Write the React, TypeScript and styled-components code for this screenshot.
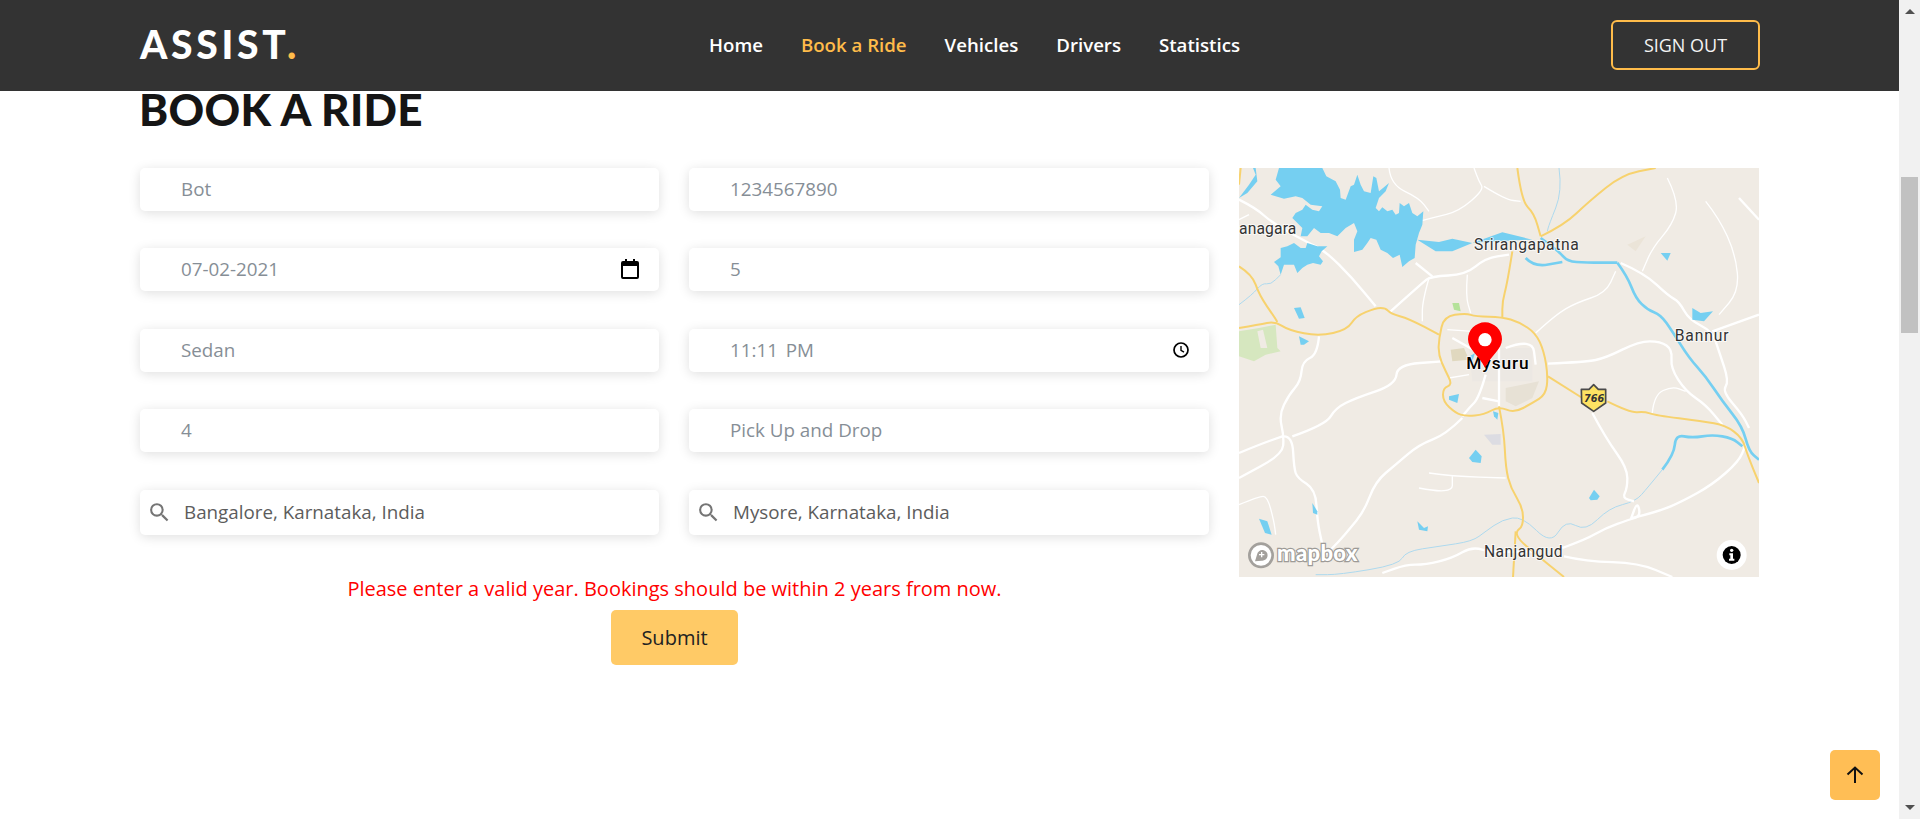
import React from 'react';
import styled, { createGlobalStyle } from 'styled-components';

const GlobalStyle = createGlobalStyle`
  html, body {
    margin: 0;
    height: 100%;
    overflow: hidden;
    background: #fff;
    font-family: 'Open Sans', 'Liberation Sans', sans-serif;
  }
`;

const Viewport = styled.div`
  display: flex;
  height: 100vh;
`;

const Page = styled.div`
  flex: 1;
  min-width: 0;
`;

const NavBar = styled.nav`
  display: flex;
  align-items: center;
  box-sizing: border-box;
  height: 91px;
  padding: 0 139px 1px 140px;
  background: #333;
`;

const Logo = styled.div`
  flex: 0 0 569px;
  font-family: Lato, sans-serif;
  font-size: 39px;
  font-weight: 900;
  letter-spacing: 3.7px;
  line-height: 46px;
  margin-top: -2px;
  color: #fff;

  span {
    color: #ffbc4a;
  }
`;

const NavLinks = styled.div`
  display: flex;
  gap: 38px;
  margin: 0 auto 2px 0;
`;

const NavLink = styled.a<{ $active?: boolean }>`
  font-size: 18.65px;
  font-weight: 600;
  color: ${(p) => (p.$active ? '#ffbc4a' : '#fff')};
`;

const SignOut = styled.button`
  width: 149px;
  height: 50px;
  padding: 0;
  background: transparent;
  border: 2px solid #ffbc4a;
  border-radius: 6px;
  color: #f4f4f4;
  font-family: inherit;
  font-size: 18px;
`;

const Content = styled.main`
  padding: 0 140px;
`;

const Title = styled.h1`
  margin: 0 0 0 -1px;
  height: 77px;
  font-family: Lato, sans-serif;
  font-size: 44px;
  font-weight: 900;
  letter-spacing: 0.3px;
  line-height: 36px;
  color: #151515;
`;

const Columns = styled.div`
  display: flex;
  gap: 30px;
`;

const Form = styled.form`
  display: flex;
  flex-direction: column;
  align-items: center;
  width: 1069px;
`;

const FieldGrid = styled.div`
  display: grid;
  grid-template-columns: 519px 520px;
  gap: 37.4px 30px;
  width: 100%;
`;

const Field = styled.div<{ $search?: boolean }>`
  display: flex;
  align-items: center;
  box-sizing: border-box;
  height: ${(p) => (p.$search ? '45px' : '43px')};
  padding: ${(p) => (p.$search ? '0 20px 0 7px' : '0 20px 1px 41px')};
  background: #fff;
  border-radius: 5px;
  box-shadow: 0 2px 12px rgba(0, 0, 0, 0.13);
  font-size: 18.8px;
  color: ${(p) => (p.$search ? '#5c5c5c' : '#868e96')};
`;

const FieldText = styled.span<{ $time?: boolean }>`
  flex: 1;
  word-spacing: ${(p) => (p.$time ? '3px' : '0')};
`;

const SearchIcon = styled.svg`
  flex: none;
  width: 25px;
  height: 25px;
  margin-right: 12px;
  fill: #757575;
`;

const ErrorText = styled.p`
  margin: 40px 0 8px;
  font-size: 20px;
  line-height: 27px;
  color: #f00;
`;

const Submit = styled.button`
  width: 127px;
  height: 55px;
  padding: 0;
  background: #ffca66;
  border: 0;
  border-radius: 5px;
  color: #222;
  font-family: inherit;
  font-size: 20px;
`;

const MapFrame = styled.div`
  flex: none;
  width: 520px;
  height: 409px;
  overflow: hidden;
  background: #f0ebe4;
`;

const MapDrawing = styled.svg`
  display: block;
  width: 520px;
  height: 409px;
`;

const MapBase = styled.g`
  filter: blur(1.2px);
`;

const MapLabel = styled.text<{ $size?: number; $strong?: boolean }>`
  font-family: Roboto, sans-serif;
  font-size: ${(p) => p.$size ?? 47}px;
  font-weight: ${(p) => (p.$strong ? 500 : 400)};
  fill: ${(p) => (p.$strong ? '#000' : '#333')};
  stroke: rgba(255, 255, 255, 0.7);
  stroke-width: 6px;
  paint-order: stroke;
`;

const ShieldNumber = styled.text`
  font-family: 'DejaVu Sans', sans-serif;
  font-size: 29px;
  font-weight: 700;
  font-style: italic;
  fill: #333;
`;

const MapboxMark = styled.text`
  font-family: Lato, sans-serif;
  font-size: 66px;
  font-weight: 900;
  letter-spacing: 1px;
  fill: #fff;
  stroke: #9d9a96;
  stroke-width: 7px;
  paint-order: stroke;
`;

const ScrollTrack = styled.div`
  display: flex;
  flex: none;
  flex-direction: column;
  align-items: center;
  width: 21px;
  background: #f1f1f1;
`;

const ScrollArrow = styled.div<{ $down?: boolean }>`
  width: 0;
  height: 0;
  margin: ${(p) => (p.$down ? 'auto 0 9px' : '9px 0 0')};
  border-left: 5px solid transparent;
  border-right: 5px solid transparent;
  ${(p) => (p.$down ? 'border-top: 5px solid #505050;' : 'border-bottom: 5px solid #505050;')}
`;

const ScrollThumb = styled.div`
  width: 17px;
  height: 156px;
  margin-top: 163px;
  background: #c1c1c1;
`;

const BackToTop = styled.button`
  position: fixed;
  right: 40px;
  bottom: 19px;
  display: flex;
  align-items: center;
  justify-content: center;
  width: 50px;
  height: 50px;
  padding: 0;
  background: #ffbe55;
  border: 0;
  border-radius: 5px;
`;

const searchPath =
  'M15.5 14h-.79l-.28-.27A6.471 6.471 0 0 0 16 9.5 6.5 6.5 0 1 0 9.5 16c1.61 0 3.09-.59 4.23-1.57l.27.28v.79l5 4.99L20.49 19l-4.99-5zm-6 0C7.01 14 5 11.99 5 9.5S7.01 5 9.5 5 14 7.01 14 9.5 11.99 14 9.5 14z';

const CalendarIcon = () => (
  <svg width="18" height="20" viewBox="0 0 18 20">
    <path
      fillRule="evenodd"
      d="M4 0h2v2h6V0h2v2h2a2 2 0 0 1 2 2v14a2 2 0 0 1-2 2H2a2 2 0 0 1-2-2V4a2 2 0 0 1 2-2h2V0zM2 7v11h14V7H2z"
    />
  </svg>
);

const ClockIcon = () => (
  <svg width="16" height="16" viewBox="0 0 16 16" fill="none" stroke="#000">
    <circle cx="8" cy="8" r="7" strokeWidth="1.7" />
    <path d="M8 4v4.4l3 1.8" strokeWidth="1.4" />
  </svg>
);

// rounds a hand-traced polyline so roads and rivers don't show their corners
const smooth = (d: string) => {
  const closed = d.endsWith('Z');
  const pts = d
    .replace(/[MZ]/g, '')
    .split('L')
    .map((p) => p.trim().split(' ').map(Number));
  const mid = (a: number[], b: number[]) => `${(a[0] + b[0]) / 2} ${(a[1] + b[1]) / 2}`;
  if (closed) {
    let out = `M${mid(pts[pts.length - 1], pts[0])}`;
    pts.forEach((p, i) => {
      out += `Q${p[0]} ${p[1]} ${mid(p, pts[(i + 1) % pts.length])}`;
    });
    return `${out}Z`;
  }
  let out = `M${pts[0][0]} ${pts[0][1]}`;
  for (let i = 1; i < pts.length - 1; i++) {
    out += `Q${pts[i][0]} ${pts[i][1]} ${mid(pts[i], pts[i + 1])}`;
  }
  const last = pts[pts.length - 1];
  return `${out}L${last[0]} ${last[1]}`;
};

const yellowRoads = [
  'M615 445L680 436L710 445L790 447L840 462L890 495L915 550L927 625L920 680L880 705L825 735L780 715L735 740L680 745L650 735L612 700L612 660L640 650L620 610L598 560L600 510Z',
  'M0 480L60 470L108 460L150 487L240 505L325 485L350 445L410 420L440 420L455 437L510 452L600 500',
  'M0 295L40 320L60 380L108 450L115 462',
  'M835 0L848 100L885 135L905 205',
  'M820 250L805 345L790 400L790 447',
  'M905 205L975 172L1050 100L1150 20L1250 0',
  'M927 625L1030 690',
  'M1105 700L1175 735L1215 730L1250 742L1390 760L1460 772L1510 810L1525 860L1560 945',
  'M780 715L795 790L800 900L815 960L852 1020L852 1075L830 1090L840 1115L880 1150L975 1227',
  'M830 1090L822 1227',
  'M5 0L0 50',
];

const whiteRoads = [
  'M0 95L50 120L100 165L200 220L260 250L340 330L410 415',
  'M455 430L550 345L575 325L680 320L740 270L810 260',
  'M530 285L580 325',
  'M240 505L235 560L190 580L185 640L150 680L120 740L135 805L130 860L0 930',
  'M135 805L160 805L165 900L175 930L230 965L235 1060L250 1130',
  'M0 855L60 830L130 805',
  'M160 805L260 770L290 720L350 690L470 650L475 590L610 580',
  'M670 750L620 800L540 830L470 890L410 940L375 1030L330 1085L300 1120L260 1160',
  'M927 587L1040 582L1100 570L1200 520L1265 520L1300 545L1295 600L1340 670L1400 710L1450 770',
  'M1145 285L1215 315L1290 385L1320 400L1350 455L1420 490L1440 550L1470 640L1450 670L1510 740L1530 780',
  'M1420 490L1560 440',
  'M1060 735L1100 810L1165 900L1165 960L1150 990L1185 1000',
  'M1180 1050L1260 1030L1330 1000L1420 950L1500 880L1520 830',
  'M970 1140L1040 1115L1100 1080L1170 1055L1205 1045L1195 1000L1175 1055',
  'M880 1150L760 1155L700 1135L640 1170L560 1190L500 1190L430 1215',
  'M975 1165L1040 1180L1200 1185L1300 1227',
  'M780 520L780 715',
  'M740 620L720 690L690 720L670 745',
  'M800 540L880 510L890 590',
  'M730 690L780 700',
  'M640 510L720 555',
  'M1500 90L1560 155',
];

const thinRoads = [
  'M570 330L550 400L550 460',
  'M685 320L680 385L695 435',
  'M540 160L585 148L660 130L735 65L720 40L705 0',
  'M735 55L800 95L845 100',
  'M890 495L950 440L1010 405L1100 375L1130 310',
  'M1285 30L1320 100L1300 170L1240 240L1210 310',
  'M1400 100L1440 150L1490 260L1500 370L1440 440',
  'M570 915L640 925L800 930',
  'M540 960L640 980L640 925',
  'M0 1010L60 985L85 985L105 1060L110 1100',
  'M625 485L700 490',
  'M630 630L690 620',
  'M1240 735L1245 680L1300 655L1340 670',
  'M450 0L455 50L540 90L570 130',
  'M0 155L30 140',
];

const thinRivers = [
  'M1270 905L1225 960L1190 1000L1110 1020L1040 1090L980 1055L935 1130L850 1045L790 1055L740 1090L700 1120L600 1135L500 1150L480 1190L300 1220L230 1220',
  'M960 0L970 70L930 170L925 190',
  'M0 410L40 380L70 345L95 350L125 320',
];

const lakes = [
  'M120 0L250 0L262 25L290 40L303 65L305 90L320 95L335 55L345 50L355 20L365 50L375 70L395 75L403 25L412 30L420 70L432 60L450 45L440 70L420 90L410 120L420 130L430 118L445 130L460 125L470 140L480 135L482 105L495 115L510 105L520 135L535 145L553 130L550 170L540 195L530 230L527 270L510 280L490 297L482 260L462 270L445 255L425 245L412 215L395 210L385 225L370 245L345 252L345 215L355 190L345 165L320 180L295 205L270 195L245 195L225 180L205 205L185 205L190 180L160 150L170 135L190 125L200 110L220 125L240 130L250 115L215 110L190 90L170 85L135 92L95 80L125 55L110 35Z',
  'M125 240L145 235L165 225L185 240L200 240L205 225L235 235L265 235L248 250L240 265L252 280L245 290L222 285L205 290L190 300L175 315L165 290L135 290L125 320L118 295L105 282L125 268Z',
  'M535 215L600 222L640 212L700 225L640 250L590 250Z',
  'M700 225L790 193L880 215L800 218Z',
  'M165 420L185 418L197 450L180 452Z',
  'M180 505L210 520L195 530L185 530Z',
  'M1265 255L1295 255L1285 278Z',
  'M1360 420L1385 435L1422 430L1395 460L1360 455Z',
  'M630 685L660 678L655 705L630 695Z',
  'M762 730L778 735L775 755L765 745Z',
  'M690 870L710 845L728 865L725 885L700 882Z',
  'M1050 990L1065 965L1082 985L1075 995L1055 997Z',
  'M220 1005L235 1030L235 1040L222 1035Z',
  'M60 1052L85 1060L98 1100L78 1095Z',
  'M535 1060L555 1080L567 1075L565 1090L540 1085Z',
  'M692 565L708 555L700 580Z',
  'M0 90L30 50L50 20L42 0L50 0L55 40L25 75Z',
];

const rivers = [
  'M905 210L960 250L985 280L1040 284L1135 284',
  'M860 270L885 297L970 282',
  'M1135 284L1165 325L1190 390L1225 425L1265 440L1300 490L1350 570L1400 625L1450 700L1510 775L1530 850L1560 875',
  'M1270 905L1305 860L1310 800L1360 810L1420 800L1480 810L1510 835',
];

const terrain: [string, string][] = [
  ['#d6e7bf', 'M0 490L60 480L110 470L115 540L125 550L80 560L45 580L0 565Z'],
  ['#f0ebe4', 'M55 490L72 485L85 540L65 540Z'],
  ['#b5e29a', 'M640 405L660 405L665 430L645 425Z'],
  ['#b5e29a', 'M793 615L820 610L810 625L795 627Z'],
  ['#ece8e3', 'M690 540L880 540L880 640L700 640Z'],
  ['#e0d8bf', 'M635 545L675 540L690 575L640 580Z'],
  ['#e7e1d5', 'M800 660L900 640L880 690L830 715L800 700Z'],
  ['#ebe4d8', 'M1165 230L1220 205L1190 250Z'],
  ['#dcdce2', 'M735 800L785 798L785 830L760 830Z'],
];

const MysoreMap = () => (
  <MapDrawing viewBox="0 0 1560 1227">
    <MapBase>
      {terrain.map(([color, d]) => (
        <path key={d} d={d} fill={color} />
      ))}
      {thinRivers.map((d) => (
        <path key={d} d={smooth(d)} fill="none" stroke="#add9ee" strokeWidth="3" />
      ))}
      {thinRoads.map((d) => (
        <path key={d} d={smooth(d)} fill="none" stroke="#fff" strokeWidth="4" />
      ))}
      {whiteRoads.map((d) => (
        <path key={d} d={smooth(d)} fill="none" stroke="#fff" strokeWidth="7" />
      ))}
      {lakes.map((d) => (
        <path key={d} d={d} fill="#75cff1" />
      ))}
      {rivers.map((d) => (
        <path key={d} d={smooth(d)} fill="none" stroke="#75cff1" strokeWidth="8" />
      ))}
      {yellowRoads.map((d) => (
        <path key={d} d={smooth(d)} fill="none" stroke="#f7d26e" strokeWidth="6" />
      ))}
    </MapBase>

    <MapLabel x="0" y="197" textLength="172">anagara</MapLabel>
    <MapLabel x="705" y="247" textLength="314">Srirangapatna</MapLabel>
    <MapLabel x="1307" y="520" textLength="162">Bannur</MapLabel>
    <MapLabel x="735" y="1168" textLength="236">Nanjangud</MapLabel>
    <MapLabel x="682" y="604" $size={52} $strong textLength="187">Mysuru</MapLabel>

    <path
      d="M1027 664L1050 664L1064 650L1078 664L1100 664L1100 705L1064 730L1028 705Z"
      fill="#fde263"
      stroke="#4a4a4a"
      strokeWidth="5"
      strokeLinejoin="round"
    />
    <ShieldNumber x="1035" y="701">766</ShieldNumber>

    <path
      d="M738 463a51 51 0 0 1 51 51c0 30-32 48-51 85c-19-37-51-55-51-85a51 51 0 0 1 51-51z"
      fill="#f00"
    />
    <circle cx="738" cy="515" r="20" fill="#fff" />

    <circle cx="66" cy="1162" r="35" fill="#fff" stroke="#a3a09c" strokeWidth="8" />
    <path d="M48 1180L54 1160a16 16 0 1 1 14 18Z" fill="#a3a09c" />
    <path d="M68 1152v16M60 1160h16" stroke="#fff" strokeWidth="4" />
    <MapboxMark x="114" y="1180">mapbox</MapboxMark>

    <circle cx="1478" cy="1161" r="45" fill="#fff" />
    <circle cx="1478" cy="1161" r="27" fill="#000" />
    <circle cx="1478" cy="1147" r="5" fill="#fff" />
    <path d="M1471 1156h11v16h4v6h-16v-6h4v-10h-3z" fill="#fff" />
  </MapDrawing>
);

const fields = [
  { text: 'Bot' },
  { text: '1234567890' },
  { text: '07-02-2021', icon: <CalendarIcon /> },
  { text: '5' },
  { text: 'Sedan' },
  { text: '11:11 PM', icon: <ClockIcon />, time: true },
  { text: '4' },
  { text: 'Pick Up and Drop' },
];

const places = ['Bangalore, Karnataka, India', 'Mysore, Karnataka, India'];

export default function App() {
  return (
    <Viewport>
      <GlobalStyle />
      <Page>
        <NavBar>
          <Logo>
            ASSIST<span>.</span>
          </Logo>
          <NavLinks>
            <NavLink>Home</NavLink>
            <NavLink $active>Book a Ride</NavLink>
            <NavLink>Vehicles</NavLink>
            <NavLink>Drivers</NavLink>
            <NavLink>Statistics</NavLink>
          </NavLinks>
          <SignOut>SIGN OUT</SignOut>
        </NavBar>
        <Content>
          <Title>BOOK A RIDE</Title>
          <Columns>
            <Form>
              <FieldGrid>
                {fields.map((f) => (
                  <Field key={f.text}>
                    <FieldText $time={f.time}>{f.text}</FieldText>
                    {f.icon}
                  </Field>
                ))}
                {places.map((place) => (
                  <Field key={place} $search>
                    <SearchIcon viewBox="0 0 24 24">
                      <path d={searchPath} />
                    </SearchIcon>
                    <FieldText>{place}</FieldText>
                  </Field>
                ))}
              </FieldGrid>
              <ErrorText>Please enter a valid year. Bookings should be within 2 years from now.</ErrorText>
              <Submit type="button">Submit</Submit>
            </Form>
            <MapFrame>
              <MysoreMap />
            </MapFrame>
          </Columns>
        </Content>
      </Page>
      <ScrollTrack>
        <ScrollArrow />
        <ScrollThumb />
        <ScrollArrow $down />
      </ScrollTrack>
      <BackToTop type="button" aria-label="Back to top">
        <svg width="20" height="20" viewBox="0 0 20 20" fill="none" stroke="#111" strokeWidth="2">
          <path d="M10 18V2.500M2.500 9.500L10 2.500l7.500 7" />
        </svg>
      </BackToTop>
    </Viewport>
  );
}
